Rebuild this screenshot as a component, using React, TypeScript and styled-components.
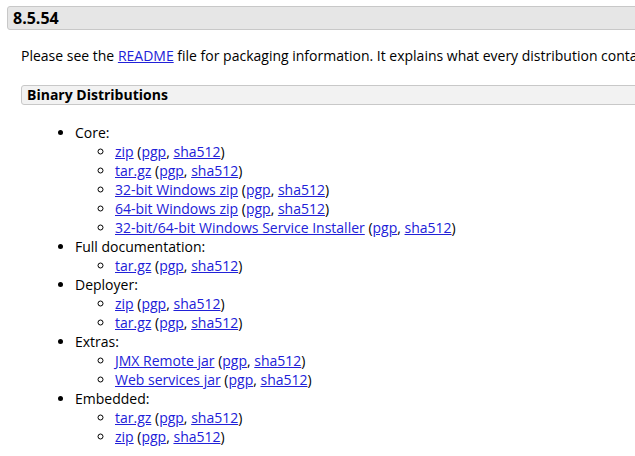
import React from "react";
import styled, { createGlobalStyle } from "styled-components";

const GlobalStyle = createGlobalStyle`
  html, body {
    margin: 0;
    padding: 0;
    background: #fff;
    overflow: hidden;
  }
  body {
    font-family: "Open Sans", "Liberation Sans", sans-serif;
    font-size: 14px;
    line-height: 19px;
    color: #000;
  }
`;

const Page = styled.div`
  width: 900px;
  padding: 6px 0 0 7px;
`;

const SectionTitle = styled.h3`
  margin: 0;
  padding: 1px 5px;
  font-size: 16px;
  line-height: 20px;
  font-weight: 700;
  background: #e6e6e6;
  border: 1px solid #c8c8c8;
  border-radius: 3px;
`;

const SectionBody = styled.div`
  padding: 16px 0 0 14px;
`;

const Para = styled.p`
  margin: 0 0 20px;
`;

const SubTitle = styled.h4`
  margin: 0;
  padding: 1px 5px;
  font-size: 14px;
  line-height: 16px;
  font-weight: 700;
  background: #f2f2f2;
  border: 1px solid #c8c8c8;
  border-radius: 3px;
`;

const List = styled.ul`
  margin: 18px 0 0;
  padding-left: 54px;
  list-style: disc;
`;

const SubList = styled.ul`
  margin: 0;
  padding-left: 40px;
  list-style: circle;
`;

const Link = styled.a`
  color: #2121d8;
  text-decoration: underline;
`;

type Entry = { name: string; sigs?: boolean };

const groups: { title: string; items: Entry[] }[] = [
  {
    title: "Core:",
    items: [
      { name: "zip", sigs: true },
      { name: "tar.gz", sigs: true },
      { name: "32-bit Windows zip", sigs: true },
      { name: "64-bit Windows zip", sigs: true },
      { name: "32-bit/64-bit Windows Service Installer", sigs: true },
    ],
  },
  { title: "Full documentation:", items: [{ name: "tar.gz", sigs: true }] },
  {
    title: "Deployer:",
    items: [
      { name: "zip", sigs: true },
      { name: "tar.gz", sigs: true },
    ],
  },
  {
    title: "Extras:",
    items: [
      { name: "JMX Remote jar", sigs: true },
      { name: "Web services jar", sigs: true },
    ],
  },
  {
    title: "Embedded:",
    items: [
      { name: "tar.gz", sigs: true },
      { name: "zip", sigs: true },
    ],
  },
];

const Download: React.FC<{ entry: Entry }> = ({ entry }) => (
  <li>
    <Link href="#">{entry.name}</Link>
    {entry.sigs && (
      <>
        {" "}(<Link href="#">pgp</Link>, <Link href="#">sha512</Link>)
      </>
    )}
  </li>
);

export default function App() {
  return (
    <>
      <GlobalStyle />
      <Page>
        <SectionTitle>8.5.54</SectionTitle>
        <SectionBody>
          <Para>
            Please see the <Link href="#">README</Link> file for packaging
            information. It explains what every distribution contains.
          </Para>
          <SubTitle>Binary Distributions</SubTitle>
          <List>
            {groups.map((g) => (
              <li key={g.title}>
                {g.title}
                <SubList>
                  {g.items.map((it, i) => (
                    <Download key={i} entry={it} />
                  ))}
                </SubList>
              </li>
            ))}
          </List>
        </SectionBody>
      </Page>
    </>
  );
}
